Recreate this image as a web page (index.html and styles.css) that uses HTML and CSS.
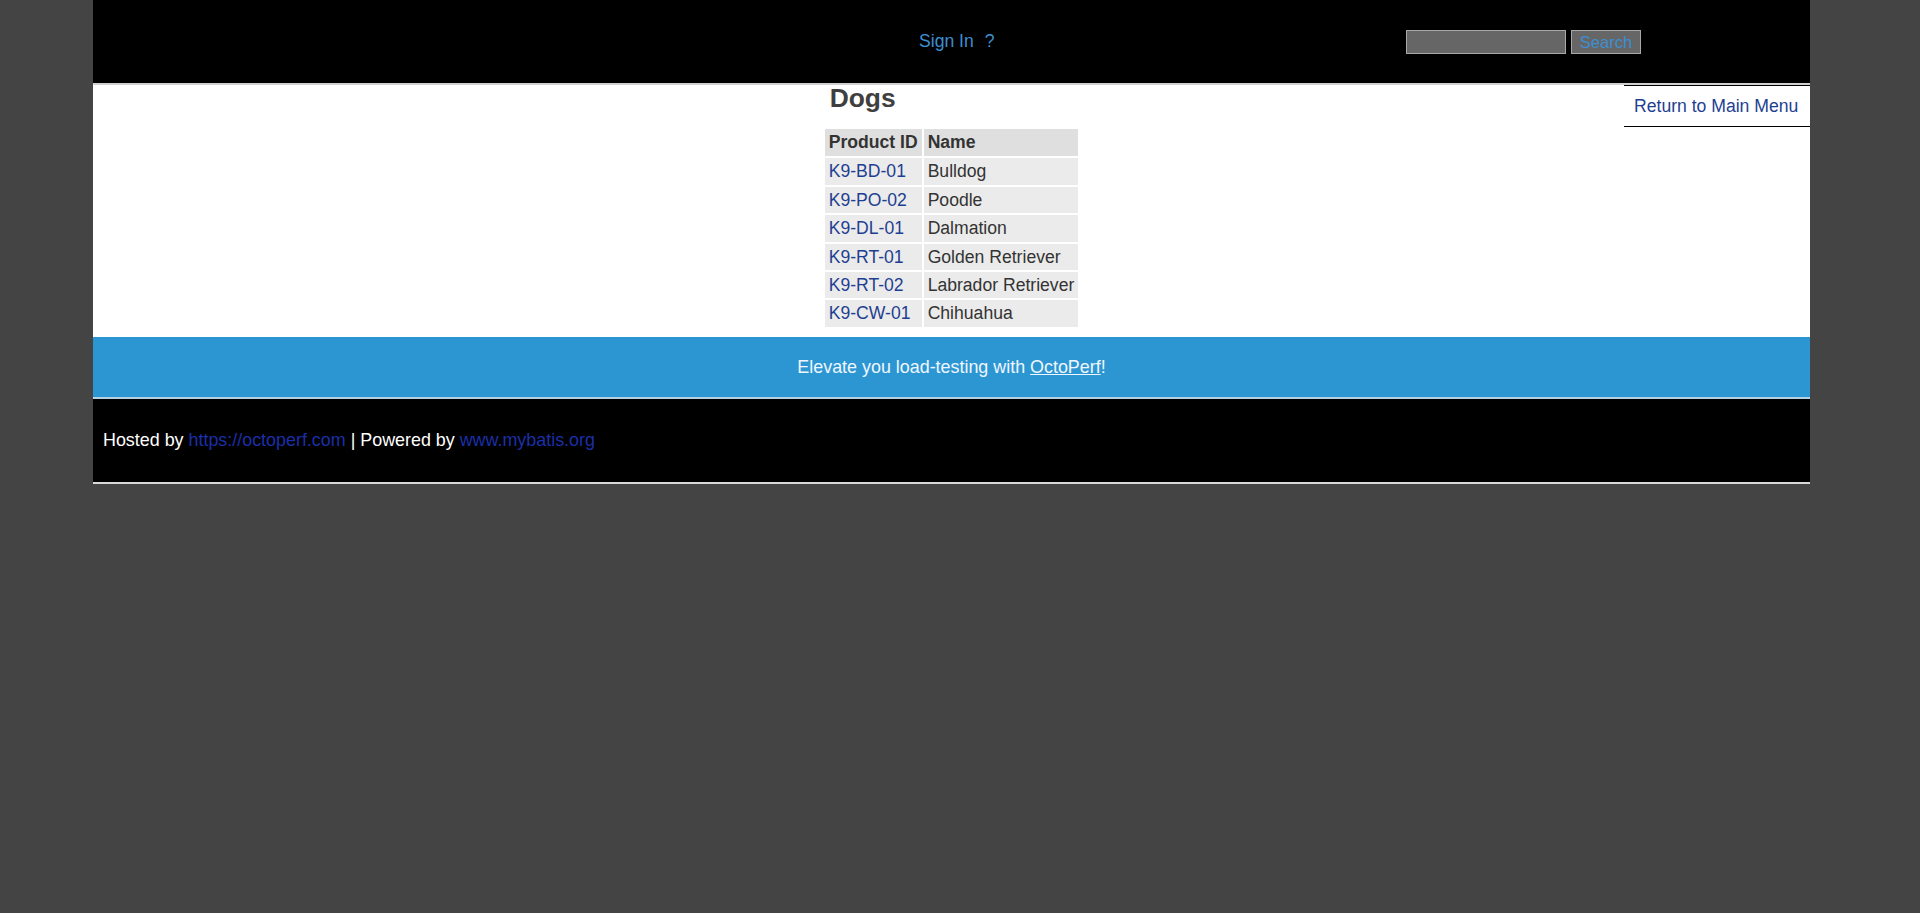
FILE: index.html
```html
<!DOCTYPE html>
<html lang="en">
<head>
<meta charset="utf-8">
<title>JPetStore Demo</title>
<link rel="stylesheet" href="styles.css">
</head>
<body>
<div class="page">
  <div class="header">
    <div class="logo"></div>
    <div class="menu">
      <a href="#" class="menu-link">Sign In</a>
      <a href="#" class="menu-link help">?</a>
    </div>
    <form class="search" onsubmit="return false;">
      <input type="text" class="search-input" name="keyword">
      <button type="submit" class="search-btn">Search</button>
    </form>
  </div>

  <div class="content">
    <div class="backlink"><a href="#">Return to Main Menu</a></div>
    <div class="catalog">
      <h2 class="catalog-title">Dogs</h2>
      <table class="products">
        <tr><th>Product ID</th><th>Name</th></tr>
        <tr><td><a href="#">K9-BD-01</a></td><td>Bulldog</td></tr>
        <tr><td><a href="#">K9-PO-02</a></td><td>Poodle</td></tr>
        <tr><td><a href="#">K9-DL-01</a></td><td>Dalmation</td></tr>
        <tr><td><a href="#">K9-RT-01</a></td><td>Golden Retriever</td></tr>
        <tr><td><a href="#">K9-RT-02</a></td><td>Labrador Retriever</td></tr>
        <tr><td><a href="#">K9-CW-01</a></td><td>Chihuahua</td></tr>
      </table>
    </div>
  </div>

  <div class="promo"><p class="promo-text">Elevate you load-testing with <a href="#" class="promo-link">OctoPerf</a>!</p></div>

  <div class="footer">
    <p class="footer-text">Hosted by <a href="#" class="footer-link">https://octoperf.com</a> | Powered by <a href="#" class="footer-link">www.mybatis.org</a></p>
  </div>
</div>
</body>
</html>
```

FILE: styles.css
```css
html, body {
  margin: 0;
  padding: 0;
}
body {
  background: #444444;
  font-family: "Liberation Sans", Arial, sans-serif;
  font-size: 17.6px;
  color: #333333;
}
.page {
  width: 1717px;
  margin-left: 93px;
}
a {
  text-decoration: none;
}

/* Header */
.header {
  background: #000000;
  height: 83px;
  border-bottom: 2px solid #cfcfcf;
  display: grid;
  grid-template-columns: 826px 487px auto;
  align-items: center;
}
.menu {
  display: flex;
  gap: 11px;
  padding-bottom: 1px;
}
.menu-link {
  color: #3d8fd1;
}
.search {
  display: flex;
  gap: 5px;
  margin: 0;
}
.search-input {
  box-sizing: border-box;
  width: 160px;
  height: 24px;
  margin: 0;
  background: #666666;
  border: 1px solid #a8a8a8;
  padding: 0 2px;
}
.search-btn {
  box-sizing: border-box;
  width: 70px;
  height: 24px;
  margin: 0;
  background: #666666;
  border: 1px solid #a8a8a8;
  color: #3d8fd1;
  font-family: "Liberation Sans", Arial, sans-serif;
  font-size: 16.5px;
  line-height: 20px;
  padding: 0;
}

/* Content */
.content {
  background: #ffffff;
  height: 252px;
  display: flow-root;
}
.backlink {
  float: right;
  width: 186px;
  box-sizing: border-box;
  border-top: 1px solid #000000;
  border-bottom: 1px solid #000000;
  padding: 10px 10px 9px 10px;
  line-height: 21px;
}
.backlink a {
  color: #1e3f91;
}
.catalog {
  width: fit-content;
  margin: 0 auto;
}
.catalog-title {
  margin: 0 0 0 7px;
  font-size: 26.4px;
  line-height: 26px;
  font-weight: bold;
  color: #3f3f3f;
}
.products {
  margin-top: 16px;
  border-spacing: 2px;
}
.products th,
.products td {
  padding: 3px 4px;
  line-height: 20.4px;
  text-align: left;
  background: #ebebeb;
}
.products th {
  padding-bottom: 4px;
  background: #dfdfdf;
  font-weight: bold;
  color: #333333;
}
.products a {
  color: #1e3f91;
}

/* Promo band */
.promo {
  background: #2c96d3;
  height: 60px;
  border-bottom: 2px solid #b3d2e6;
  display: flex;
  align-items: center;
  justify-content: center;
  color: #f0f6ff;
}
.promo-text {
  margin: 0;
  font-size: 17.9px;
}
.promo-link {
  color: #f0f6ff;
  text-decoration: underline;
}

/* Footer */
.footer {
  background: #000000;
  height: 83px;
  border-bottom: 2px solid #d8d8d8;
  display: flex;
  align-items: center;
  padding-left: 10px;
  color: #ffffff;
}
.footer-text {
  margin: 0;
  font-size: 17.9px;
}
.footer-link {
  color: #1b2fa8;
}
```
